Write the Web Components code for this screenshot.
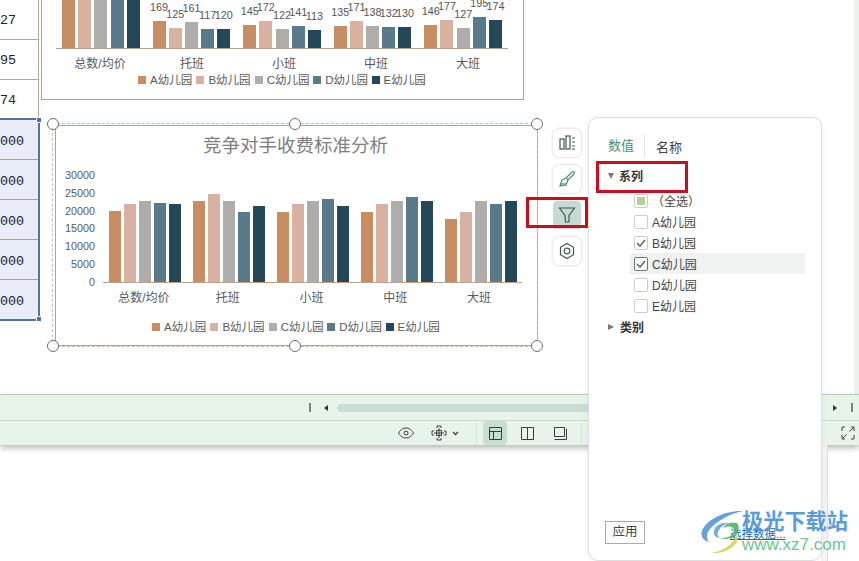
<!DOCTYPE html>
<html lang="zh">
<head>
<meta charset="utf-8">
<title>图表筛选</title>
<style>
  html, body { margin: 0; padding: 0; background: #fff; }
  body { width: 859px; height: 561px; overflow: hidden; font-family: "Liberation Sans", "Noto Sans CJK SC", sans-serif; }
</style>
</head>
<body>
<app-shell>
  <sheet-cells slot="cells"></sheet-cells>
  <bar-chart slot="top" id="top"></bar-chart>
  <bar-chart slot="main" id="main" selected></bar-chart>
  <chart-tools slot="tools"></chart-tools>
  <status-bars slot="bars"></status-bars>
  <filter-panel slot="panel"></filter-panel>
  <site-mark slot="mark"></site-mark>
</app-shell>

<script>
const CJK = `"Liberation Sans", "Noto Sans CJK SC", sans-serif`;
const COLORS = ['#c68e62', '#d8b1a0', '#afadab', '#587a8a', '#24485a'];
const NAMES = ['A幼儿园', 'B幼儿园', 'C幼儿园', 'D幼儿园', 'E幼儿园'];
const CATS = ['总数/均价', '托班', '小班', '中班', '大班'];

// page frame: sheet on top, status bars, then the empty window below
class AppShell extends HTMLElement {
  constructor() {
    super();
    this.attachShadow({ mode: 'open' });
    this.shadowRoot.innerHTML = `
      <style>
        :host { display: block; position: relative; width: 859px; height: 561px; overflow: hidden; background: #fff; }
        .sheet { display: flex; height: 394px; width: 854px; position: relative; overflow: hidden; }
        .charts { display: flex; flex-direction: column; padding-left: 2px; }
        .edge { position: absolute; left: 854px; top: 0; width: 5px; height: 394px; background: #e9f3eb; }
        .lower { position: absolute; left: 827px; top: 445px; width: 1px; height: 116px; background: #dcdcdc; }
        .gutter { position: absolute; left: 821px; top: 445px; width: 6px; height: 116px; background: #f4f4f4; }
        ::slotted([slot=tools]) { position: absolute; left: 553px; top: 129px; }
        ::slotted([slot=panel]) { position: absolute; left: 588px; top: 117px; }
        ::slotted([slot=mark]) { position: absolute; left: 699px; top: 508px; }
        ::slotted([slot=main]) { margin: 25px 0 0 14px; }
      </style>
      <div class="sheet">
        <slot name="cells"></slot>
        <div class="charts">
          <slot name="top"></slot>
          <slot name="main"></slot>
        </div>
      </div>
      <div class="edge"></div>
      <slot name="bars"></slot>
      <div class="gutter"></div>
      <div class="lower"></div>
      <slot name="tools"></slot>
      <slot name="panel"></slot>
      <slot name="mark"></slot>
    `;
  }
}

// the sliver of worksheet at the left edge
class SheetCells extends HTMLElement {
  constructor() {
    super();
    this.attachShadow({ mode: 'open' });
    const plain = ['27', '95', '74'].map(t => `<div class="c">${t}</div>`).join('');
    const sel = Array(5).fill('000').map(t => `<div class="c s">${t}</div>`).join('');
    this.shadowRoot.innerHTML = `
      <style>
        :host { display: block; width: 39px; flex: none; font: 13.4px "Liberation Mono", monospace; color: #222; }
        .plain { border-right: 1px solid #b9a590; }
        .c { height: 39px; line-height: 42px; border-bottom: 1px solid #b9a590; white-space: nowrap; }
        .plain .c:last-child { border-bottom: none; height: 38px; }
        .sel { position: relative; background: #e9edf9; border: solid #5470a8; border-width: 2px 2px 2px 0; height: 199px; margin-right: -1px; }
        .s { border-bottom-color: #bd9c8c; line-height: 43px; }
        .s:last-of-type { border-bottom: none; }
        .dot { position: absolute; width: 4px; height: 4px; background: #4f6fb5; border: 1px solid #fff; right: -4px; }
      </style>
      <div class="plain">${plain}</div>
      <div class="sel">${sel}<span class="dot" style="top:-3px"></span><span class="dot" style="bottom:-3px"></span></div>
    `;
  }
}

// clustered column chart, configured from JS below
class BarChart extends HTMLElement {
  constructor() {
    super();
    this.attachShadow({ mode: 'open' });
  }

  set config(c) {
    const groups = c.data.map((g, gi) => `
      <div class="group" style="gap:${c.gap}px">
        ${g.map((h, i) => `
          <div class="col" style="width:${c.barW}px">
            ${c.labels ? `<span class="val">${c.labels[gi][i]}</span>` : ''}
            <i style="height:${h}px;background:${COLORS[i]}"></i>
          </div>`).join('')}
      </div>`).join('');
    const cats = CATS.map(t => `<span>${t}</span>`).join('');
    const legend = NAMES.map((t, i) => `<span class="key"><i style="background:${COLORS[i]}"></i>${t}</span>`).join('');
    const axis = c.axis ? `<div class="axis">${c.axis.map(t => `<span>${t}</span>`).join('')}</div>` : '';
    // selection frame sits slightly outside the chart border, handles ride on it
    const handles = c.handles ? '<div class="dash">' + ['0,0', '50%,0', '100%,0', '0,100%', '50%,100%', '100%,100%'].map(p => {
      const [x, y] = p.split(',');
      return `<b class="h" style="left:${x};top:${y}"></b>`;
    }).join('') + '</div>' : '';

    this.shadowRoot.innerHTML = `
      <style>
        :host { display: block; position: relative; box-sizing: border-box; width: ${c.w}px; height: ${c.h}px; background: #fff;
          border: 1px solid #b9a088; ${c.noTop ? 'border-top: none;' : ''} font-family: ${CJK}; color: #595959; flex: none; }
        .title { height: ${c.titleH}px; line-height: ${c.titleH}px; text-align: center; font-size: 18.5px; color: #808080; padding-right: 2px; }
        .row { display: flex; height: ${c.plotH}px; padding-left: ${c.plotL}px; }
        .axis { width: ${c.axisW}px; flex: none; display: flex; flex-direction: column; justify-content: space-between; align-items: flex-end;
          font-size: 10.8px; line-height: 14px; margin: 2px 8px -6px 0; }
        .plot { display: flex; align-items: flex-end; justify-content: space-between; box-sizing: border-box; width: ${c.plotW}px;
          padding: 0 ${c.plotPadR}px 0 ${c.plotPad}px; border-bottom: 1px solid #b9a088; }
        .group { display: flex; align-items: flex-end; }
        .col { display: flex; flex-direction: column; align-items: center; }
        .col i { display: block; width: 100%; }
        .val { font-size: 10.8px; line-height: 14px; margin-bottom: 7px; white-space: nowrap; color: #555; }
        .cats { display: flex; justify-content: space-between; box-sizing: border-box; margin-left: ${c.catsL}px; width: ${c.catsW}px;
          font-size: 12px; line-height: 16px; margin-top: ${c.catsT}px; }
        .cats span { width: 84px; text-align: center; white-space: nowrap; }
        .legend { display: flex; justify-content: center; gap: 5px; font-size: 11.5px; line-height: 16px; margin-top: ${c.legT}px; padding-right: 2px; }
        .key { display: inline-flex; align-items: center; gap: 4px; white-space: nowrap; width: 53.4px; }
        .key i { width: 8px; height: 8px; flex: none; }
        .dash { position: absolute; left: -4px; top: -3px; right: -1px; bottom: -2px; border: 1px dashed #c9bbae; pointer-events: none; }
        .h { position: absolute; width: 10px; height: 10px; transform: translate(-50%, -50%); border: 1.5px solid #6f6f6f; border-radius: 50%; background: #fff; z-index: 2; }
      </style>
      ${c.title ? `<div class="title">${c.title}</div>` : ''}
      <div class="row">${axis}<div class="plot">${groups}</div></div>
      <div class="cats">${cats}</div>
      <div class="legend">${legend}</div>
      ${handles}
    `;
  }
}

class ChartTools extends HTMLElement {
  constructor() {
    super();
    this.attachShadow({ mode: 'open' });
    this.shadowRoot.innerHTML = `
      <style>
        :host { display: flex; flex-direction: column; gap: 8px; width: 28px; }
        .b { width: 28px; height: 28px; border-radius: 6px; background: #fff; box-shadow: 0 0 3px rgba(0,0,0,.22); display: flex; align-items: center; justify-content: center; }
        .on { background: #c6dad3; box-shadow: none; border-radius: 4px 4px 0 0; }
        svg { width: 20px; height: 20px; fill: none; stroke: #3f5a52; stroke-width: 1.2; }
        .mark { position: absolute; left: -27px; top: 68px; width: 56px; height: 25px; border: 3px solid #c8101a; }
      </style>
      <div class="b"><svg viewBox="0 0 20 20"><rect x="3" y="6" width="4" height="10"/><rect x="9" y="3" width="4" height="13"/><path d="M15 5h3M15 9h3M15 13h3M15 16h3"/></svg></div>
      <div class="b"><svg viewBox="0 0 20 20"><path stroke="#4d8f72" d="M17 3c1 1 0 2-1 3l-5 5-2-2 5-5c1-1 2-2 3-1zM9 9l-4 2-2 6 6-1 2-5" /><path stroke="#4d8f72" d="M3 15h7"/></svg></div>
      <div class="b on"><svg viewBox="0 0 20 20"><path d="M2.500 3h15l-5.500 7.500V17H8.500l-.5-6.500z"/></svg></div>
      <div class="b"><svg viewBox="0 0 20 20"><path d="M10 2.500l6.500 3.750v7.500L10 17.500l-6.500-3.750v-7.500z"/><circle cx="10" cy="10" r="2.800"/></svg></div>
      <div class="mark"></div>
    `;
  }
}

// scroll bar row + view mode row
class StatusBars extends HTMLElement {
  constructor() {
    super();
    this.attachShadow({ mode: 'open' });
    this.shadowRoot.innerHTML = `
      <style>
        :host { display: block; width: 859px; background: #e8f3ea; box-shadow: 0 3px 6px rgba(0,0,0,.28); position: relative; }
        .r1 { border-top: 1px solid #b7cabd; border-bottom: 1px solid #cfdcd2; display: flex; align-items: center; box-sizing: border-box; height: 27px; padding-left: 309px; }
        .tick { width: 2px; height: 9px; background: #6d8a7c; }
        .l { width: 0; height: 0; border: 3.500px solid transparent; border-right: 4px solid #333; border-left: 0; margin: 0 9px 0 13px; }
        .track { width: 470px; height: 8px; border-radius: 4px; background: #c9ddd5; }
        .rr { width: 0; height: 0; border: 3.500px solid transparent; border-left: 4px solid #333; border-right: 0; margin: 0 14px 0 26px; }
        .r2 { height: 24px; display: flex; align-items: center; padding-left: 397px; }
        svg { display: block; fill: none; stroke: #3c3c3c; stroke-width: 1; }
        .m { margin-left: 16px; display: flex; align-items: center; gap: 5px; }
        .div { width: 1px; height: 24px; background: #d6e3d9; }
        .v { width: 23px; height: 24px; display: flex; align-items: center; justify-content: center; margin-right: 10px; border-radius: 4px; }
        .act { background: #c5dfd0; width: 24px; margin-right: 9px; }
        .fs { margin-left: 259px; }
      </style>
      <div class="r1"><span class="tick"></span><span class="l"></span><span class="track"></span><span class="rr"></span><span class="tick"></span></div>
      <div class="r2">
        <svg width="18" height="14" viewBox="0 0 18 14"><path d="M1.500 7C4 3 6.500 2 9 2s5 1 7.500 5C14 11 11.500 12 9 12S4 11 1.500 7z"/><circle cx="9" cy="7" r="2"/></svg>
        <span class="m">
          <svg width="16" height="16" viewBox="0 0 16 16"><path d="M6 3V1h4v2M6 13v2h4v-2M3 6H1v4h2M13 6h2v4h-2M5.500 5.500h5v5h-5zM8 3v10M3 8h10"/></svg>
          <svg width="7" height="5" viewBox="0 0 7 5"><path d="M1 1l2.500 2.500L6 1" stroke-width="1.300"/></svg>
        </span>
        <span style="width:17px"></span><span class="div"></span><span style="width:6px"></span>
        <span class="v act"><svg width="15" height="15" viewBox="0 0 15 15"><path d="M1.500 1.500h12v12h-12zM1.500 5.500h12M5.500 5.500v8"/></svg></span>
        <span class="v"><svg width="15" height="15" viewBox="0 0 15 15"><path d="M1.500 1.500h12v12h-12zM7.500 1.500v12"/></svg></span>
        <span class="v"><svg width="15" height="15" viewBox="0 0 15 15"><path d="M1.500 1.500h10v9h-10zM1.500 13.500h12V3"/></svg></span>
        <span class="div" style="margin-left:-1px"></span>
        <span class="fs"><svg width="14" height="14" viewBox="0 0 14 14"><path d="M1 5V1h3M10 1h3v4M13 9v4h-3M4 13H1V9M8.500 5.500L12 2M2 12l3.500-3.500"/></svg></span>
      </div>
    `;
  }
}

class FilterRow extends HTMLElement {
  static get observedAttributes() { return ['state', 'hover']; }
  constructor() {
    super();
    this.attachShadow({ mode: 'open' });
  }
  connectedCallback() { this.render(); }
  attributeChangedCallback() { this.render(); }
  render() {
    const state = this.getAttribute('state') || '';
    const inner = state === 'check' ? '<svg width="10" height="8" viewBox="0 0 10 8"><path d="M1 4l3 3 5-6" fill="none" stroke="#4c5d54" stroke-width="1.300"/></svg>'
      : state === 'part' ? '<i></i>' : '';
    this.shadowRoot.innerHTML = `
      <style>
        :host { display: flex; align-items: center; height: 21px; padding-left: 4px; gap: 4px; width: 175px; box-sizing: border-box; font-size: 12px; color: #444; }
        :host([hover]) { background: #eff2f0; }
        .box { width: 12px; height: 12px; border: 1px solid #ccc; border-radius: 2px; display: flex; align-items: center; justify-content: center; background: #fff; flex: none; }
        :host([hover]) .box { border-color: #62806f; }
        i { width: 8px; height: 8px; background: #b5d29c; }
      </style>
      <span class="box">${inner}</span><slot></slot>
    `;
  }
}

class FilterPanel extends HTMLElement {
  constructor() {
    super();
    this.attachShadow({ mode: 'open' });
    this.shadowRoot.innerHTML = `
      <style>
        :host { display: flex; flex-direction: column; box-sizing: border-box; width: 234px; height: 444px; padding: 16px 16px 0 19px; background: #fff;
          border: 1px solid #dfdfdf; border-radius: 10px; box-shadow: 0 0 6px rgba(0,0,0,.06); color: #444; font-size: 12px; position: relative; font-family: ${CJK}; }
        .tabs { display: flex; align-items: center; height: 24px; font-size: 13px; }
        .tabs .on { color: #4d8f72; padding-right: 10px; border-right: 1px solid #e3e3e3; line-height: 24px; margin-right: 11px; }
        .head { display: flex; align-items: center; height: 21px; font-weight: 700; gap: 5px; color: #333; margin-top: 7px; }
        .down { width: 0; height: 0; border: 3.500px solid transparent; border-top: 6px solid #777; border-bottom: 0; }
        .right { width: 0; height: 0; border: 3.500px solid transparent; border-left: 6px solid #777; border-right: 0; margin-right: 1px; }
        .list { margin: 4px 0 0 22px; display: flex; flex-direction: column; }
        .head.cat { margin-top: 0; }
        .red { position: absolute; left: 7px; top: 43px; width: 86px; height: 26px; border: 3px solid #c8101a; }
        .apply { position: absolute; left: 16px; top: 403px; width: 40px; height: 23px; box-sizing: border-box; border: 1px solid #aaa; text-align: center; line-height: 21px; font-size: 12.5px; }
        .link { position: absolute; left: 141px; top: 407px; color: #1a6bb0; text-decoration: underline; font-size: 11.5px; }
      </style>
      <div class="tabs"><span class="on">数值</span><span>名称</span></div>
      <div class="head"><span class="down"></span><span>系列</span></div>
      <div class="list">
        <filter-row state="part">（全选）</filter-row>
        <filter-row>A幼儿园</filter-row>
        <filter-row state="check">B幼儿园</filter-row>
        <filter-row state="check" hover>C幼儿园</filter-row>
        <filter-row>D幼儿园</filter-row>
        <filter-row>E幼儿园</filter-row>
      </div>
      <div class="head cat"><span class="right"></span><span>类别</span></div>
      <div class="red"></div>
      <div class="apply">应用</div>
      <div class="link">选择数据...</div>
    `;
  }
}

// site watermark over the corner
class SiteMark extends HTMLElement {
  constructor() {
    super();
    this.attachShadow({ mode: 'open' });
    this.shadowRoot.innerHTML = `
      <style>
        :host { display: flex; align-items: center; gap: 0; width: 155px; height: 48px; opacity: .92; pointer-events: none; font-family: ${CJK}; }
        svg { flex: none; }
        .t { display: flex; flex-direction: column; margin-left: -5px; }
        .cn { font-size: 21.200px; line-height: 26px; font-weight: 700; color: #4d94d4; white-space: nowrap; }
        .en { font: 17px/20px "Liberation Sans", sans-serif; color: #63c08b; white-space: nowrap; }
      </style>
      <svg width="48" height="48" viewBox="0 0 48 48">
        <path d="M44 3C28 2 7 11 3 23c-2 6 2 10 7 11C7 30 7 25 12 20 19 12 31 6 44 3z" fill="#5a9ad8"/>
        <path d="M30 15c-7-1-14 2-15 8-1 4 2 7 6 7-3-2-3-5-1-8 2-4 6-6 10-7z" fill="#6da6dc"/>
        <path d="M38 15c-7-1-12 1-14 5 4-2 8-2 10 0 2 3 0 7-5 9-3 1-6 1-8 1 5 2 11 1 15-3 4-4 5-9 2-12z" fill="#5cb46a"/>
        <path d="M38 27c-3 8-13 16-26 18 10 1 21-3 26-11 1-2 1-5 0-7z" fill="#d8d75a"/>
      </svg>
      <div class="t"><span class="cn">极光下载站</span><span class="en">www.xz7.com</span></div>
    `;
  }
}

customElements.define('app-shell', AppShell);
customElements.define('sheet-cells', SheetCells);
customElements.define('bar-chart', BarChart);
customElements.define('chart-tools', ChartTools);
customElements.define('status-bars', StatusBars);
customElements.define('filter-row', FilterRow);
customElements.define('filter-panel', FilterPanel);
customElements.define('site-mark', SiteMark);

document.getElementById('top').config = {
  w: 483, h: 100, noTop: true, titleH: 0, plotH: 49, plotL: 14, plotW: 452, plotPad: 6, plotPadR: 6, axisW: 0,
  barW: 13, gap: 3.2, catsL: 16, catsW: 452, catsT: 7, legT: 0,
  data: [[70, 70, 70, 70, 70], [27, 20, 26, 19, 19], [23, 27, 19, 22, 18], [22, 27, 22, 21, 21], [23, 28, 20, 31, 28]],
  labels: [['', '', '', '', ''], [169, 125, 161, 117, 120], [145, 172, 122, 141, 113], [135, 171, 138, 132, 130], [146, 177, 127, 195, 174]]
};

document.getElementById('main').config = {
  w: 483, h: 221, title: '竞争对手收费标准分析', titleH: 40, plotH: 117, plotL: 9, plotW: 419, plotPad: 6, plotPadR: 5, axisW: 30,
  barW: 12, gap: 3, catsL: 46, catsW: 419, catsT: 7, legT: 13,
  data: [[71, 78, 81, 79, 78], [81, 88, 81, 70, 76], [70, 78, 81, 83, 76], [70, 78, 81, 85, 81], [63, 70, 81, 78, 81]],
  axis: ['30000', '25000', '20000', '15000', '10000', '5000', '0'],
  handles: true
};
</script>
</body>
</html>
